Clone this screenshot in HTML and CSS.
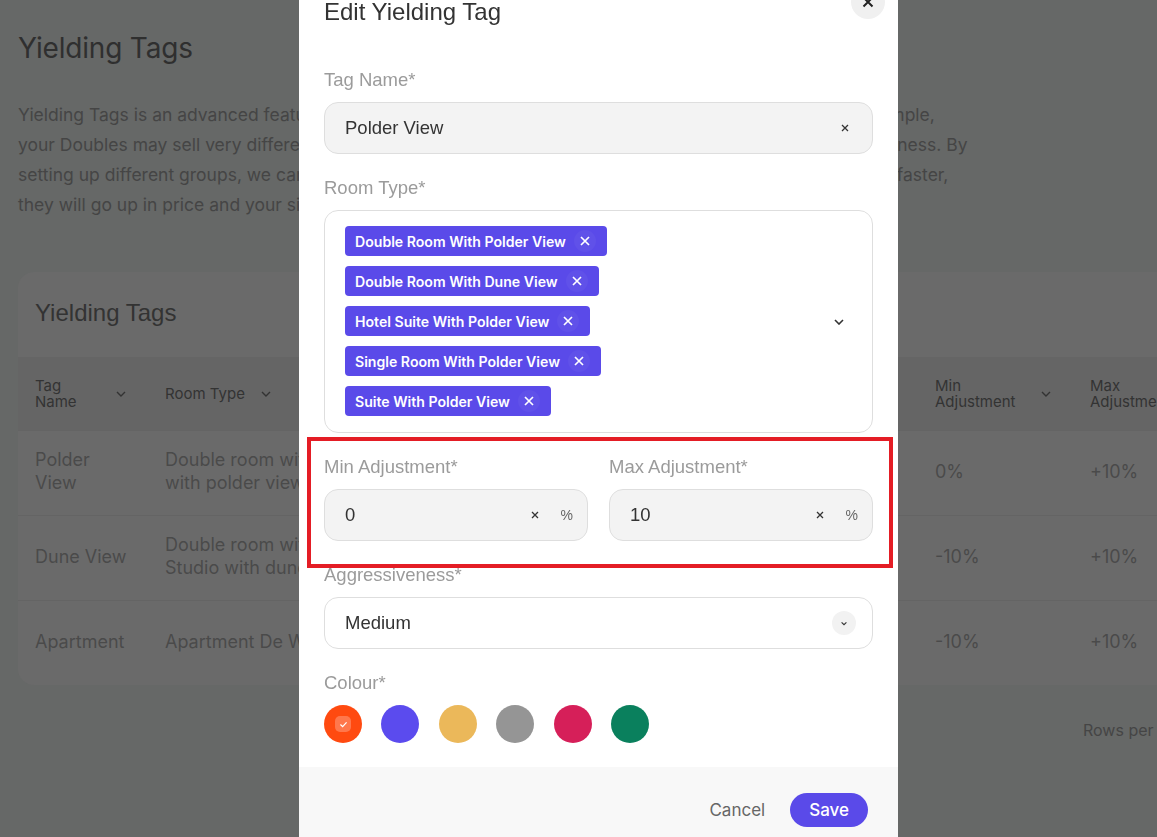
FILE: index.html
```html
<!DOCTYPE html>
<html lang="en">
<head>
<meta charset="utf-8">
<title>Yielding Tags</title>
<link rel="stylesheet" href="styles.css">
</head>
<body>
<main class="page">
  <h1 class="page-title">Yielding Tags</h1>
  <p class="intro">Yielding Tags is an advanced feature that allows you to easily group room types that sell similarly. For example,<br>your Doubles may sell very differently from your Singles, and they may need a different level of aggressiveness. By<br>setting up different groups, we can make sure that the prices are optimised per group: if your Doubles sell faster,<br>they will go up in price and your singles can stay competitive.</p>

  <section class="card">
    <h2 class="card-title">Yielding Tags</h2>
    <div class="table">
      <div class="thead">
        <div class="th th-spread"><span>Tag<br>Name</span><svg class="chev" viewBox="0 0 10 6"><path d="M1 1l4 4 4-4"/></svg></div>
        <div class="th"><span>Room Type</span><svg class="chev" viewBox="0 0 10 6"><path d="M1 1l4 4 4-4"/></svg></div>
        <div class="th"><span>Aggressiveness</span><svg class="chev" viewBox="0 0 10 6"><path d="M1 1l4 4 4-4"/></svg></div>
        <div class="th"><span>Colour</span></div>
        <div class="th th-spread"><span>Min<br>Adjustment</span><svg class="chev" viewBox="0 0 10 6"><path d="M1 1l4 4 4-4"/></svg></div>
        <div class="th th-spread"><span>Max<br>Adjustment</span><svg class="chev" viewBox="0 0 10 6"><path d="M1 1l4 4 4-4"/></svg></div>
        <div class="th"></div>
      </div>
      <div class="tr">
        <div class="td">Polder View</div>
        <div class="td">Double room with polder view, Suite<br>with polder view, Hotel suite</div>
        <div class="td">Medium</div>
        <div class="td"></div>
        <div class="td">0%</div>
        <div class="td">+10%</div>
        <div class="td"></div>
      </div>
      <div class="tr">
        <div class="td">Dune View</div>
        <div class="td">Double room with dune view,<br>Studio with dune view</div>
        <div class="td">High</div>
        <div class="td"></div>
        <div class="td">-10%</div>
        <div class="td">+10%</div>
        <div class="td"></div>
      </div>
      <div class="tr">
        <div class="td">Apartment</div>
        <div class="td">Apartment De Wadden</div>
        <div class="td">Low</div>
        <div class="td"></div>
        <div class="td">-10%</div>
        <div class="td">+10%</div>
        <div class="td"></div>
      </div>
    </div>
  </section>

  <div class="pagination">
    <span>Rows per page:</span>
    <span>10</span>
    <span>1–3 of 3</span>
  </div>
</main>

<div class="modal">
  <div class="modal-body">
    <h3 class="modal-title">Edit Yielding Tag</h3>
    <button class="close-btn" type="button" aria-label="Close">
      <svg viewBox="0 0 12 12"><path d="M1.5 1.5l9 9M10.5 1.5l-9 9"/></svg>
    </button>

    <div class="field">
      <label class="label">Tag Name*</label>
      <div class="input input-clear">
        <span class="value">Polder View</span>
        <svg class="x-icon" viewBox="0 0 8 8"><path d="M1 1l6 6M7 1L1 7"/></svg>
      </div>
    </div>

    <div class="field">
      <label class="label">Room Type*</label>
      <div class="multi">
        <div class="chips">
          <span class="chip">Double Room With Polder View<span class="chip-x"><svg viewBox="0 0 10 10"><path d="M1 1l8 8M9 1L1 9"/></svg></span></span>
          <span class="chip">Double Room With Dune View<span class="chip-x"><svg viewBox="0 0 10 10"><path d="M1 1l8 8M9 1L1 9"/></svg></span></span>
          <span class="chip">Hotel Suite With Polder View<span class="chip-x"><svg viewBox="0 0 10 10"><path d="M1 1l8 8M9 1L1 9"/></svg></span></span>
          <span class="chip">Single Room With Polder View<span class="chip-x"><svg viewBox="0 0 10 10"><path d="M1 1l8 8M9 1L1 9"/></svg></span></span>
          <span class="chip">Suite With Polder View<span class="chip-x"><svg viewBox="0 0 10 10"><path d="M1 1l8 8M9 1L1 9"/></svg></span></span>
        </div>
        <svg class="multi-chev" viewBox="0 0 10 6"><path d="M1 1l4 4 4-4"/></svg>
      </div>
    </div>

    <div class="field field-row">
      <div class="highlight"></div>
      <div class="col">
        <label class="label">Min Adjustment*</label>
        <div class="input input-pct">
          <span class="value">0</span>
          <svg class="x-icon" viewBox="0 0 8 8"><path d="M1 1l6 6M7 1L1 7"/></svg>
          <span class="pct">%</span>
        </div>
      </div>
      <div class="col">
        <label class="label">Max Adjustment*</label>
        <div class="input input-pct">
          <span class="value">10</span>
          <svg class="x-icon" viewBox="0 0 8 8"><path d="M1 1l6 6M7 1L1 7"/></svg>
          <span class="pct">%</span>
        </div>
      </div>
    </div>

    <div class="field">
      <label class="label">Aggressiveness*</label>
      <div class="select">
        <span class="value">Medium</span>
        <span class="select-chev"><svg viewBox="0 0 10 6"><path d="M2 1.5l3 3 3-3"/></svg></span>
      </div>
    </div>

    <div class="field">
      <label class="label">Colour*</label>
      <div class="swatches">
        <span class="swatch sw-orange"><span class="check"><svg viewBox="0 0 10 8"><path d="M1.5 4l2.5 2.5L8.5 1.5"/></svg></span></span>
        <span class="swatch sw-purple"></span>
        <span class="swatch sw-yellow"></span>
        <span class="swatch sw-grey"></span>
        <span class="swatch sw-red"></span>
        <span class="swatch sw-green"></span>
      </div>
    </div>
  </div>
  <div class="modal-footer">
    <button class="btn-cancel" type="button">Cancel</button>
    <button class="btn-save" type="button">Save</button>
  </div>
</div>
</body>
</html>
```

FILE: styles.css
```css
* { box-sizing: border-box; }

html, body {
  margin: 0;
  height: 100%;
  overflow: hidden;
}

body {
  background: #666867;
  font-family: Inter, "Noto Sans", sans-serif;
  color: #474747;
}

.page {
  padding: 32px 0 0 18px;
  width: 1400px;
}

.page-title {
  margin: 0;
  font-size: 28px;
  line-height: 32px;
  font-weight: 400;
  color: #2f2f2f;
  letter-spacing: -0.2px;
}

.intro {
  margin: 36px 0 0;
  font-size: 17.5px;
  line-height: 30px;
  color: #454545;
  white-space: nowrap;
}

.card {
  margin-top: 52px;
  width: 1300px;
  background: #6a6a6a;
  border-radius: 16px;
  overflow: hidden;
}

.card-title {
  margin: 0;
  height: 85px;
  display: flex;
  align-items: center;
  padding: 0 0 4px 17px;
  font-family: "Liberation Sans", Arial, sans-serif;
  font-size: 24px;
  font-weight: 400;
  color: #333;
}

.thead, .tr {
  display: grid;
  grid-template-columns: 130px 300px 190px 280px 155px 155px 1fr;
}

.thead {
  height: 73px;
  background: #656565;
}

.th {
  display: flex;
  align-items: center;
  gap: 16px;
  padding: 0 22px 0 17px;
  font-size: 15px;
  line-height: 16px;
  color: #333;
}

.th-spread { justify-content: space-between; }

.chev {
  width: 10px;
  height: 6px;
  flex: none;
}
.chev path {
  fill: none;
  stroke: #333;
  stroke-width: 1.4;
}

.tr {
  height: 85px;
  border-top: 1px solid #646464;
}
.tr:first-of-type { border-top: 0; }

.td {
  display: flex;
  align-items: center;
  padding: 0 18px 4px 17px;
  font-size: 18px;
  line-height: 23px;
  color: #4a4a4a;
  white-space: normal;
  overflow: hidden;
}
.tr .td:nth-child(2) { white-space: nowrap; }

.pagination {
  display: flex;
  gap: 24px;
  padding: 35px 0 0 1065px;
  font-size: 16px;
  color: #454545;
}

/* Modal */
.modal {
  position: fixed;
  left: 299px;
  top: -22px;
  width: 599px;
  background: #fff;
  display: flex;
  flex-direction: column;
  border-radius: 0 0 16px 16px;
}

.modal-body {
  position: relative;
  padding: 20px 25px 24px;
}

.modal-title {
  margin: 0 0 42px;
  font-family: "Liberation Sans", Arial, sans-serif;
  font-size: 24px;
  line-height: 28px;
  font-weight: 400;
  color: #333;
}

.close-btn {
  position: absolute;
  top: 7px;
  right: 13px;
  width: 34px;
  height: 34px;
  border-radius: 50%;
  border: 0;
  background: #f0f0f0;
  display: flex;
  align-items: center;
  justify-content: center;
  padding: 0;
}
.close-btn svg { width: 12px; height: 12px; }
.close-btn path { stroke: #222; stroke-width: 2; fill: none; }

.field + .field { margin-top: 22px; }

.label {
  display: block;
  font-family: "Liberation Sans", Arial, sans-serif;
  font-size: 18.5px;
  line-height: 24px;
  color: #9b9b9b;
  margin-bottom: 10px;
}

.input {
  height: 52px;
  border: 1px solid #dedede;
  border-radius: 14px;
  background: #f3f3f3;
  display: flex;
  align-items: center;
  padding: 0 14px 0 20px;
}

.input-clear { padding-right: 23px; }

.value {
  flex: 1;
  font-family: "Liberation Sans", Arial, sans-serif;
  font-size: 18.5px;
  color: #333;
}

.x-icon { width: 8px; height: 8px; flex: none; }
.x-icon path { stroke: #333; stroke-width: 1.3; fill: none; }

.pct {
  margin-left: 22px;
  font-family: "Liberation Sans", Arial, sans-serif;
  font-size: 14px;
  color: #666;
}

.multi {
  position: relative;
  height: 223px;
  border: 1px solid #dedede;
  border-radius: 14px;
  background: #fff;
  padding: 15px 20px;
  display: flex;
  align-items: center;
}

.chips {
  flex: 1;
  align-self: flex-start;
  display: flex;
  flex-direction: column;
  align-items: flex-start;
  gap: 10px;
}

.chip {
  height: 30px;
  display: inline-flex;
  align-items: center;
  background: #5a4ae9;
  border-radius: 4px;
  padding: 0 11px 0 10px;
  color: #fff;
  font-size: 14.1px;
  font-weight: 600;
}

.chip-x {
  width: 22px;
  height: 22px;
  margin-left: 8px;
  border-radius: 50%;
  background: rgba(255, 255, 255, 0.04);
  display: flex;
  align-items: center;
  justify-content: center;
}
.chip-x svg { width: 10px; height: 10px; }
.chip-x path { stroke: #fff; stroke-width: 1.7; fill: none; }

.multi-chev {
  width: 10px;
  height: 6px;
  margin-right: 8px;
}
.multi-chev path { stroke: #333; stroke-width: 1.6; fill: none; }

.field-row {
  position: relative;
  display: flex;
  gap: 21px;
}
.field-row .col { flex: 1; }

.highlight {
  position: absolute;
  left: -17px;
  right: -20px;
  top: -18px;
  bottom: -27px;
  border: 4px solid #e41d25;
  pointer-events: none;
}

.select {
  height: 52px;
  border: 1px solid #dedede;
  border-radius: 14px;
  background: #fff;
  display: flex;
  align-items: center;
  padding: 0 16px 0 20px;
}

.select-chev {
  width: 24px;
  height: 24px;
  border-radius: 50%;
  background: #f2f2f2;
  display: flex;
  align-items: center;
  justify-content: center;
}
.select-chev svg { width: 8px; height: 5px; }
.select-chev path { stroke: #333; stroke-width: 1.4; fill: none; }

.swatches {
  display: flex;
  gap: 19.4px;
}

.swatch {
  width: 38px;
  height: 38px;
  border-radius: 50%;
  display: flex;
  align-items: center;
  justify-content: center;
}
.sw-orange { background: #ff4a10; }
.sw-purple { background: #5b4bee; }
.sw-yellow { background: #ebb85a; }
.sw-grey { background: #959595; }
.sw-red { background: #d61f59; }
.sw-green { background: #0a805d; }

.check {
  width: 16px;
  height: 16px;
  border-radius: 5px;
  background: rgba(255, 255, 255, 0.25);
  display: flex;
  align-items: center;
  justify-content: center;
}
.check svg { width: 9px; height: 7px; }
.check path { stroke: #fff; stroke-width: 1.4; fill: none; }

.modal-footer {
  background: #f8f8f8;
  display: flex;
  justify-content: flex-end;
  align-items: center;
  gap: 25px;
  padding: 26px 30px 30px;
}

.btn-cancel {
  border: 0;
  background: none;
  padding: 0;
  font-family: Inter, sans-serif;
  font-size: 17px;
  color: #666;
}

.btn-save {
  height: 34px;
  padding: 0 19px;
  border: 0;
  border-radius: 17px;
  background: #5a4ae9;
  color: #fff;
  font-family: Inter, sans-serif;
  font-size: 17px;
  font-weight: 500;
}
```
